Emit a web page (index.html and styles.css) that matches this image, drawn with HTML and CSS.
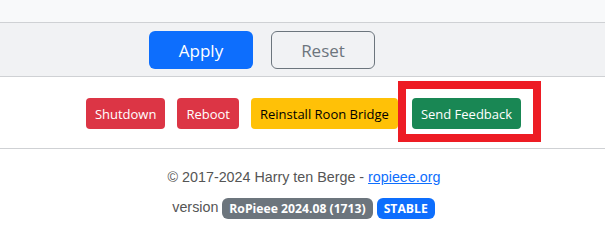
FILE: index.html
```html
<!DOCTYPE html>
<html>
<head>
<meta charset="utf-8">
<link rel="stylesheet" href="styles.css">
</head>
<body>
<div class="top"></div>
<div class="apply-bar">
  <button class="btn btn-lg btn-primary">Apply</button>
  <button class="btn btn-lg btn-outline">Reset</button>
</div>
<div class="actions">
  <button class="btn btn-sm btn-danger">Shutdown</button>
  <button class="btn btn-sm btn-danger">Reboot</button>
  <button class="btn btn-sm btn-warning">Reinstall Roon Bridge</button>
  <span class="highlight-wrap">
    <button class="btn btn-sm btn-success">Send Feedback</button>
    <span class="highlight"></span>
  </span>
</div>
<footer class="footer">
  <p class="copy">© 2017-2024 Harry ten Berge - <a href="#">ropieee.org</a></p>
  <p class="version">version <span class="badge badge-gray">RoPieee 2024.08 (1713)</span> <span class="badge badge-blue">STABLE</span></p>
</footer>
</body>
</html>
```
FILE: styles.css
```css
html, body {
  margin: 0;
  padding: 0;
  background: #ffffff;
}
body {
  font-family: "Open Sans", "Noto Sans", sans-serif;
}
.top {
  height: 22px;
  background: #f8f9fa;
  border-bottom: 1px solid #cfd1d4;
}
.apply-bar {
  background: #f1f2f4;
  border-bottom: 1px solid #cfd1d4;
  height: 54px;
  display: flex;
  gap: 18px;
  padding-left: 149px;
  align-items: flex-start;
  padding-top: 8px;
  box-sizing: border-box;
}
.btn {
  font-family: "Open Sans", "Noto Sans", sans-serif;
  border: 1px solid transparent;
  cursor: pointer;
  box-sizing: border-box;
}
.btn-lg {
  width: 104px;
  height: 38px;
  font-size: 17px;
  border-radius: 6px;
  padding: 0;
}
.btn-primary {
  background: #0d6efd;
  color: #ffffff;
}
.btn-outline {
  background: transparent;
  color: #6c757d;
  border-color: #6c757d;
}
.actions {
  display: flex;
  justify-content: center;
  gap: 12px;
  padding: 21px 0 0 2px;
  height: 72px;
  box-sizing: border-box;
  border-bottom: 1px solid #cfd1d4;
}
.btn-sm {
  font-size: 13px;
  height: 31px;
  padding: 0 8px;
  border-radius: 4px;
}
.btn-danger { background: #dc3545; color: #fff; }
.btn-warning { background: #ffc107; color: #000; }
.btn-success { background: #198754; color: #fff; }
.highlight-wrap {
  position: relative;
  display: inline-block;
  margin-left: 2px;
}
.highlight {
  position: absolute;
  left: -14px;
  top: -17px;
  width: 143px;
  height: 61px;
  border: 8px solid #ed1c24;
  box-sizing: border-box;
  pointer-events: none;
}
.footer {
  text-align: center;
  padding-top: 19px;
  font-family: "Liberation Sans", Arial, sans-serif;
  color: #555555;
  font-size: 14.3px;
}
.footer p {
  margin: 0;
}
.copy {
  line-height: 18px;
  padding-left: 3px;
}
.copy a {
  color: #0d6efd;
}
.version {
  margin-top: 11px !important;
  line-height: 21px;
  padding-left: 2px;
}
.badge {
  display: inline-block;
  font-family: "Open Sans", "Noto Sans", sans-serif;
  font-weight: 700;
  font-size: 12.2px;
  line-height: 13px;
  padding: 4px 7px;
  border-radius: 6px;
  color: #fff;
  vertical-align: middle;
}
.badge-gray { background: #6c757d; }
.badge-blue { background: #0d6efd; }
```
